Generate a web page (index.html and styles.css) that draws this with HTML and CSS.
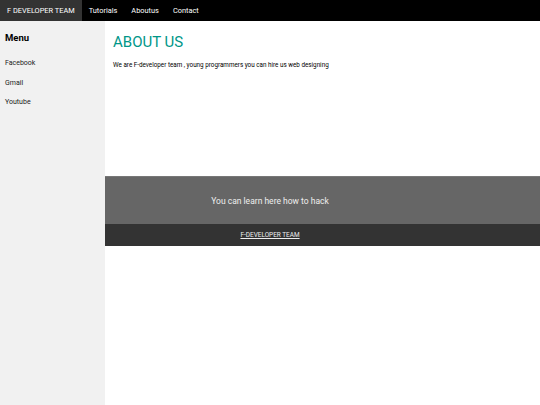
FILE: index.html
```html
<!DOCTYPE html>
<html>
<head>
<meta charset="utf-8">
<link rel="stylesheet" href="styles.css">
</head>
<body>
<div class="topbar">
  <a class="nav-item brand" href="#">F DEVELOPER TEAM</a>
  <a class="nav-item" href="#">Tutorials</a>
  <a class="nav-item" href="#">Aboutus</a>
  <a class="nav-item" href="#">Contact</a>
</div>
<div class="layout">
  <nav class="sidebar">
    <h4 class="menu-title">Menu</h4>
    <a class="side-link" href="#">Facebook</a>
    <a class="side-link" href="#">Gmail</a>
    <a class="side-link" href="#">Youtube</a>
  </nav>
  <main class="main">
    <section class="intro">
      <h1 class="title">ABOUT US</h1>
      <p class="lead">We are F-developer team , young programmers you can hire us web designing</p>
    </section>
    <div class="band">You can learn here how to hack</div>
    <footer class="footer"><a href="#" class="footer-link">F-DEVELOPER TEAM</a></footer>
  </main>
</div>
</body>
</html>
```

FILE: styles.css
```css
html, body {
  margin: 0;
  padding: 0;
  background: #fff;
  font-family: Roboto, "Liberation Sans", sans-serif;
}
a, a:visited {
  color: inherit;
}
.topbar {
  display: flex;
  height: 21px;
  background: #000;
}
.nav-item, .nav-item:visited {
  display: flex;
  align-items: center;
  padding: 0 7px;
  color: #fff;
  text-decoration: none;
  font-size: 7.4px;
}
.brand {
  background: #333;
}
.layout {
  display: flex;
  min-height: 384px;
}
.sidebar {
  width: 105px;
  flex: none;
  background: #f1f1f1;
  display: flex;
  flex-direction: column;
  padding: 0 5px;
  box-sizing: border-box;
}
.menu-title {
  margin: 11px 0 14px;
  font-size: 9.5px;
  font-weight: bold;
  color: #000;
  line-height: 12px;
}
.side-link, .side-link:visited {
  font-size: 7px;
  color: #222;
  text-decoration: none;
  line-height: 10px;
  margin-bottom: 9.5px;
}
.main {
  flex: 1;
  display: flex;
  flex-direction: column;
}
.intro {
  height: 155px;
  padding: 0 8px;
}
.title {
  margin: 12px 0 9px;
  font-size: 15px;
  font-weight: normal;
  color: #009688;
  line-height: 18px;
}
.lead {
  margin: 0;
  font-size: 6.3px;
  color: #000;
  line-height: 10px;
}
.band {
  height: 48px;
  background: #666;
  border-top: 1px solid #777;
  box-sizing: border-box;
  color: #eee;
  font-size: 8.5px;
  display: flex;
  align-items: center;
  justify-content: center;
  padding-right: 105px;
}
.footer {
  height: 22px;
  background: #333;
  display: flex;
  align-items: center;
  justify-content: center;
  padding-right: 105px;
}
.footer-link, .footer-link:visited {
  color: #eee;
  font-size: 6.45px;
  text-decoration: underline;
}
```
